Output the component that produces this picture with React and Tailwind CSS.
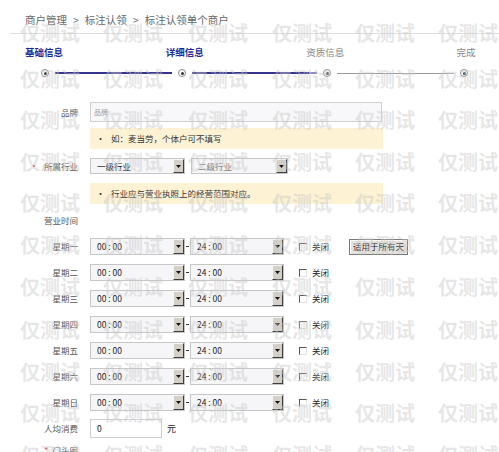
const days = ['星期一', '星期二', '星期三', '星期四', '星期五', '星期六', '星期日'];

const marks = [33, 79, 120, 162, 203, 245, 287, 330, 372, 413, 455].flatMap((y) =>
  [20, 103, 188, 272, 355, 438].map((x) => ({ x, y }))
);

function Arrow() {
  return (
    <span className="flex h-full w-[11px] shrink-0 items-center justify-center border border-t-[#f6f6f6] border-l-[#f6f6f6] border-r-[#3c3c3c] border-b-[#3c3c3c] bg-[#d4d0c8]">
      <svg width="5" height="3" viewBox="0 0 5 3">
        <path d="M0 0H5L2.5 3Z" fill="#111" />
      </svg>
    </span>
  );
}

function Select({ value, width, muted }) {
  return (
    <div className={`flex h-full items-center border border-[#c6c6c6] bg-[#f6f6f8] ${width}`}>
      <span className={`flex-1 pl-[6px] text-[8.5px] leading-none ${muted ? 'text-[#777]' : 'text-[#222]'}`}>
        {value}
      </span>
      <Arrow />
    </div>
  );
}

function Row({ label, mark, className, children }) {
  return (
    <div className={`flex items-center ${className}`}>
      <div className="flex w-[78px] shrink-0 items-center justify-end whitespace-nowrap text-[8.5px] leading-none text-[#555]">
        {mark === 'dot' && <span className="mr-[5px] text-[10px] text-[#e0303a]">•</span>}
        {mark === 'star' && <span className="mr-[4px] text-[9px] text-[#e0303a]">*</span>}
        <span>{label}</span>
      </div>
      <div className="ml-[12px] flex h-full items-center">{children}</div>
    </div>
  );
}

function Tip({ children }) {
  return (
    <div className="ml-[90px] flex h-[21px] w-[293px] items-center bg-[#fdf2d4] pl-[6px] text-[8.5px] text-[#333]">
      <span className="mr-[6px] text-[9px]">•</span>
      {children}
    </div>
  );
}

function Radio() {
  return (
    <span className="flex h-[8px] w-[8px] shrink-0 items-center justify-center rounded-full border border-[#8a8a8a] bg-white">
      <span className="h-[3px] w-[3px] rounded-full bg-[#333]" />
    </span>
  );
}

export default function App() {
  return (
    <div
      className="relative h-[452px] w-[499px] overflow-hidden bg-white"
      style={{ fontFamily: '"Noto Sans CJK SC", "Liberation Sans", sans-serif' }}
    >
      {/* breadcrumb */}
      <div className="h-[33px] pl-[25px] pt-[13px] text-[10.5px] leading-[14px] text-[#666]">
        商户管理<span className="mx-[6px]">&gt;</span>标注认领<span className="mx-[6px]">&gt;</span>标注认领单个商户
      </div>
      <div className="ml-[10px] h-px bg-[#dedede]" />

      {/* steps */}
      <div className="mt-[12px] flex justify-between pl-[24px] pr-[13px] text-[9.5px] leading-[12px]">
        <span className="w-[40px] text-center font-bold text-[#1c2c96]">基础信息</span>
        <span className="w-[40px] text-center font-bold text-[#1c2c96]">详细信息</span>
        <span className="w-[40px] text-center text-[#888]">资质信息</span>
        <span className="w-[40px] text-center text-[#888]">完成</span>
      </div>
      <div className="mt-[11px] flex items-center pl-[41px] pr-[31px]">
        <Radio />
        <span className="mx-[6px] h-[2px] flex-1 bg-[#34348c]" />
        <Radio />
        <span className="ml-[6px] h-[2px] flex-1 bg-[#34348c]" />
        <span className="mr-[6px] h-[2px] w-[8px] bg-[#8c8cc0]" />
        <Radio />
        <span className="mx-[6px] h-px flex-1 bg-[#9a9a9a]" />
        <Radio />
      </div>

      {/* form */}
      <Row label="品牌" className="mt-[25px] h-[20px]">
        <div className="flex h-full w-[292px] items-center border border-[#cfcfd4] bg-[#f8f8fb] pl-[3px] text-[7px] text-[#999]">
          品牌
        </div>
      </Row>
      <div className="mt-[6px]">
        <Tip>如：麦当劳，个体户可不填写</Tip>
      </div>

      <Row label="所属行业" mark="dot" className="mt-[9px] h-[16px]">
        <Select value="一级行业" width="w-[95px]" />
        <div className="ml-[6px] h-full">
          <Select value="二级行业" width="w-[97px]" muted />
        </div>
      </Row>
      <div className="mt-[9px]">
        <Tip>行业应与营业执照上的经营范围对应。</Tip>
      </div>

      <Row label="营业时间" className="mt-[8px] h-[16px]" />

      <div className="mt-[10px] flex flex-col gap-[9px]">
        {days.map((d, i) => (
          <Row key={d} label={d} className="h-[17px]">
            <Select value="00 : 00" width="w-[95px]" />
            <span className="mx-[1px] h-px w-[3px] bg-[#333]" />
            <Select value="24 : 00" width="w-[94px]" />
            <span className="ml-[15px] h-[8px] w-[8px] border border-t-[#555] border-l-[#555] border-r-[#e4e4e4] border-b-[#e4e4e4] bg-white" />
            <span className="ml-[5px] text-[8.5px] leading-none text-[#222]">关闭</span>
            {i === 0 && (
              <button className="ml-[20px] h-[16px] border border-[#7a7a7a] bg-[#e6e4de] px-[3px] text-[8.5px] leading-none text-[#222] shadow-[inset_1px_1px_0_#fff]">
                适用于所有天
              </button>
            )}
          </Row>
        ))}
      </div>

      <Row label="人均消费" className="mt-[8px] h-[19px]">
        <div className="flex h-full w-[72px] items-center border border-[#cfcfd4] bg-white pl-[6px] text-[8.5px] text-[#222]">
          0
        </div>
        <span className="ml-[5px] text-[9px] text-[#222]">元</span>
      </Row>

      <Row label="门头图" mark="star" className="mt-[5px] h-[14px]" />

      {/* watermark */}
      <div className="pointer-events-none absolute inset-0">
        {marks.map((m, i) => (
          <span
            key={i}
            className="absolute whitespace-nowrap text-[20px] font-bold leading-[24px] text-[rgba(200,200,200,0.45)]"
            style={{ left: m.x, top: m.y - 12 }}
          >
            仅测试
          </span>
        ))}
      </div>
    </div>
  );
}
